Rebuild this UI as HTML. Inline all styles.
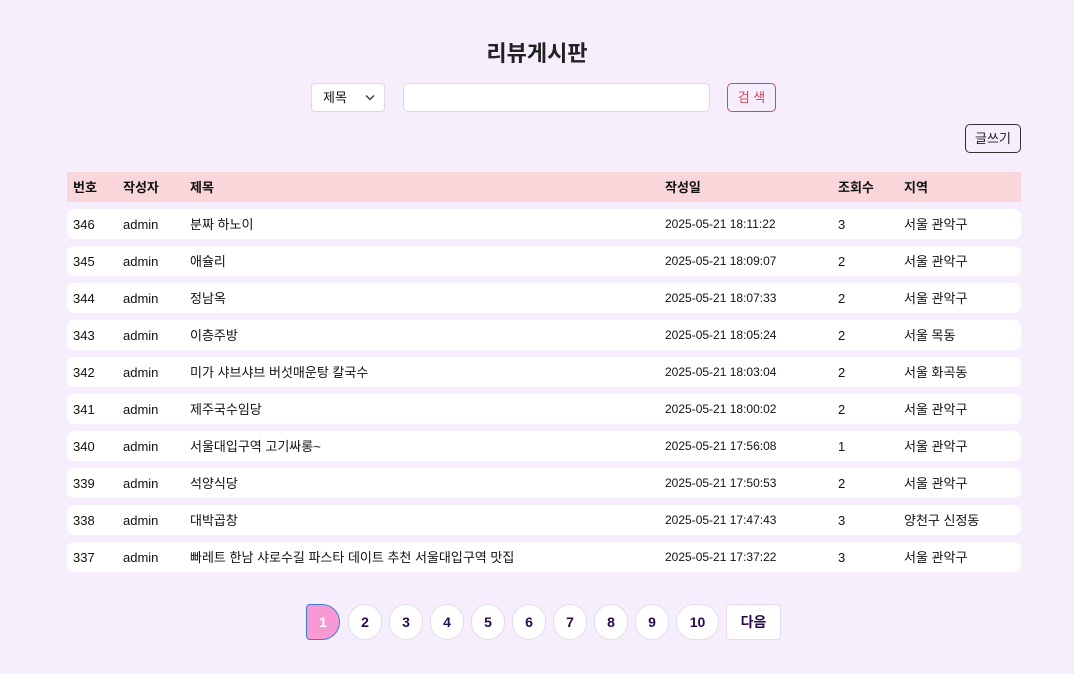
<!DOCTYPE html>
<html><head><meta charset="utf-8"><style>
body{margin:0;background:#f7eefd;font-family:"Liberation Sans","Noto Sans CJK KR",sans-serif;color:#111;width:1074px;height:674px;overflow:hidden;position:relative}
h1{position:absolute;top:39px;left:0;width:1074px;text-align:center;margin:0;font-size:22px;font-weight:bold;color:#222;line-height:30px}
.sel{position:absolute;left:311px;top:83px;width:72px;height:27px;background:#fff;border:1px solid #ddd8e6;border-radius:4px;font-size:13px;line-height:27px;box-sizing:content-box}
.sel span{position:absolute;left:11px}
.sel svg{position:absolute;left:53px;top:10px}
.inp{position:absolute;left:403px;top:83px;width:305px;height:27px;background:#fff;border:1px solid #ddd8e6;border-radius:5px}
.btn{position:absolute;left:727px;top:83px;width:47px;height:27px;border:1px solid #d0485a;border-radius:5px;color:#d0485a;font-size:13px;text-align:center;line-height:27px}
.write{position:absolute;left:965px;top:124px;width:54px;height:27px;border:1px solid #333;border-radius:5px;font-size:13px;text-align:center;line-height:27px;color:#222}
.row{position:absolute;left:67px;width:954px;height:30px;font-size:13px;line-height:31px}
.hd{top:172px;background:#f8d6da;font-weight:bold}
.r{background:#fff;border-radius:7px}
.row span{position:absolute}
.c1{left:6px}.c2{left:56px}.c3{left:123px}.c4{left:598px}.c5{left:771px}.c6{left:837px}
.r .c4{font-size:12px}
.pg{position:absolute;top:604px;height:34px;border:1px solid #e2dcea;background:#fff;border-radius:18px;text-align:center;line-height:34px;font-size:14px;font-weight:bold;color:#2a0a4a}
</style></head><body>
<h1>리뷰게시판</h1>
<div class="sel"><span>제목</span><svg width="10" height="7" viewBox="0 0 10 7"><path d="M1 1.5L5 5.5L9 1.5" fill="none" stroke="#333" stroke-width="1.3"/></svg></div>
<div class="inp"></div>
<div class="btn">검 색</div>
<div class="write">글쓰기</div>
<div class="row hd"><span class="c1">번호</span><span class="c2">작성자</span><span class="c3">제목</span><span class="c4">작성일</span><span class="c5">조회수</span><span class="c6">지역</span></div>
<div class="row r" style="top:209px"><span class="c1">346</span><span class="c2">admin</span><span class="c3">분짜 하노이</span><span class="c4">2025-05-21 18:11:22</span><span class="c5">3</span><span class="c6">서울 관악구</span></div>
<div class="row r" style="top:246px"><span class="c1">345</span><span class="c2">admin</span><span class="c3">애슐리</span><span class="c4">2025-05-21 18:09:07</span><span class="c5">2</span><span class="c6">서울 관악구</span></div>
<div class="row r" style="top:283px"><span class="c1">344</span><span class="c2">admin</span><span class="c3">정남옥</span><span class="c4">2025-05-21 18:07:33</span><span class="c5">2</span><span class="c6">서울 관악구</span></div>
<div class="row r" style="top:320px"><span class="c1">343</span><span class="c2">admin</span><span class="c3">이층주방</span><span class="c4">2025-05-21 18:05:24</span><span class="c5">2</span><span class="c6">서울 목동</span></div>
<div class="row r" style="top:357px"><span class="c1">342</span><span class="c2">admin</span><span class="c3">미가 샤브샤브 버섯매운탕 칼국수</span><span class="c4">2025-05-21 18:03:04</span><span class="c5">2</span><span class="c6">서울 화곡동</span></div>
<div class="row r" style="top:394px"><span class="c1">341</span><span class="c2">admin</span><span class="c3">제주국수임당</span><span class="c4">2025-05-21 18:00:02</span><span class="c5">2</span><span class="c6">서울 관악구</span></div>
<div class="row r" style="top:431px"><span class="c1">340</span><span class="c2">admin</span><span class="c3">서울대입구역 고기싸롱~</span><span class="c4">2025-05-21 17:56:08</span><span class="c5">1</span><span class="c6">서울 관악구</span></div>
<div class="row r" style="top:468px"><span class="c1">339</span><span class="c2">admin</span><span class="c3">석양식당</span><span class="c4">2025-05-21 17:50:53</span><span class="c5">2</span><span class="c6">서울 관악구</span></div>
<div class="row r" style="top:505px"><span class="c1">338</span><span class="c2">admin</span><span class="c3">대박곱창</span><span class="c4">2025-05-21 17:47:43</span><span class="c5">3</span><span class="c6">양천구 신정동</span></div>
<div class="row r" style="top:542px"><span class="c1">337</span><span class="c2">admin</span><span class="c3">빠레트 한남 샤로수길 파스타 데이트 추천 서울대입구역 맛집</span><span class="c4">2025-05-21 17:37:22</span><span class="c5">3</span><span class="c6">서울 관악구</span></div>
<div class="pg" style="left:306px;width:32px;background:#f79ad3;border-color:#3b7be0;color:#fff;border-radius:4px 18px 18px 4px">1</div>
<div class="pg" style="left:348px;width:32px">2</div>
<div class="pg" style="left:389px;width:32px">3</div>
<div class="pg" style="left:430px;width:32px">4</div>
<div class="pg" style="left:471px;width:32px">5</div>
<div class="pg" style="left:512px;width:32px">6</div>
<div class="pg" style="left:553px;width:32px">7</div>
<div class="pg" style="left:594px;width:32px">8</div>
<div class="pg" style="left:635px;width:32px">9</div>
<div class="pg" style="left:676px;width:41px">10</div>
<div class="pg" style="left:726px;width:53px;border-radius:4px">다음</div>
</body></html>
